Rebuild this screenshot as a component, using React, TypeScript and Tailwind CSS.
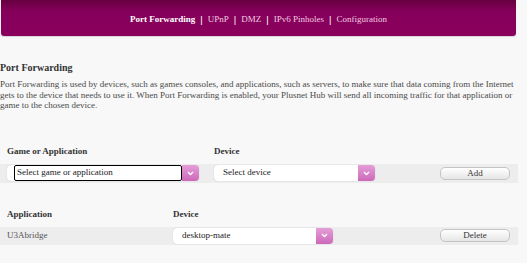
import React from "react";

const tabs = ["UPnP", "DMZ", "IPv6 Pinholes", "Configuration"];

const Chevron = () => (
  <svg width="7" height="5" viewBox="0 0 7 5" className="block">
    <path d="M1 1 L3.5 3.5 L6 1" fill="none" stroke="#fff" strokeWidth="1.3" />
  </svg>
);

const FakeSelect = ({
  label,
  width,
  focused = false,
}: {
  label: string;
  width: string;
  focused?: boolean;
}) => (
  <div className={`flex h-[16px] ${width} rounded-[4px] bg-white shadow-[0_0_1px_rgba(0,0,0,0.25)]`}>
    {focused ? (
      <div className="ml-[7px] flex flex-1 items-center rounded-[2px] border border-black pl-[2px] text-[9px] text-[#222]">
        {label}
      </div>
    ) : (
      <div className="flex flex-1 items-center pl-[9px] text-[9px] text-[#222]">{label}</div>
    )}
    <div className="flex w-[17px] items-center justify-center rounded-r-[4px] bg-gradient-to-b from-[#e59ed8] to-[#cc68b9]">
      <Chevron />
    </div>
  </div>
);

const Btn = ({ children }: { children: React.ReactNode }) => (
  <button className="flex h-[13px] w-[70px] items-center justify-center rounded-[5px] border border-[#c4c4c4] bg-gradient-to-b from-white to-[#e6e6e6] text-[9px] leading-none text-[#333] shadow-[inset_0_1px_0_#fff]">
    {children}
  </button>
);

export default function App() {
  return (
    <div
      className="h-[263px] w-[527px] overflow-hidden bg-[#f8f8f8] text-[#444]"
      style={{ fontFamily: '"Liberation Serif", "Times New Roman", serif' }}
    >
      <div className="ml-[1px] flex h-[36px] w-[515px] items-center justify-center rounded-b-[3px] bg-gradient-to-b from-[#66003f] via-[#85005a] via-30% to-[#8a005d] pt-[3px] text-[9px] shadow-[0_1px_1px_rgba(0,0,0,0.15)]">
        <span className="font-bold text-white">Port Forwarding</span>
        {tabs.map((t) => (
          <React.Fragment key={t}>
            <span className="mx-[5px] text-[11px] font-bold leading-none text-white">|</span>
            <span className="text-[#f2c9e4]">{t}</span>
          </React.Fragment>
        ))}
      </div>

      <div className="w-[518px]">
        <h2 className="mt-[26px] text-[10px] font-bold leading-[12px] text-[#333]">Port Forwarding</h2>
        <p className="mt-[5px] text-[9px] leading-[10.5px] text-[#4a4a4a]">
          Port Forwarding is used by devices, such as games consoles, and applications, such as servers, to make sure
          that data coming from the Internet gets to the device that needs to use it. When Port Forwarding is enabled,
          your Plusnet Hub will send all incoming traffic for that application or game to the chosen device.
        </p>

        <div className="mt-[34px] grid grid-cols-[214px_226px_1fr] text-[9px] font-bold leading-[12px] text-[#333]">
          <div className="pl-[7px]">Game or Application</div>
          <div>Device</div>
          <div />
        </div>
        <div className="mt-[7px] grid h-[19px] grid-cols-[214px_226px_1fr] items-center bg-[#ededed]">
          <div className="pl-[7px]">
            <FakeSelect label="Select game or application" width="w-[192px]" focused />
          </div>
          <div>
            <FakeSelect label="Select device" width="w-[161px]" />
          </div>
          <div>
            <Btn>Add</Btn>
          </div>
        </div>

        <div className="mt-[25px] grid grid-cols-[173px_267px_1fr] text-[9px] font-bold leading-[12px] text-[#333]">
          <div className="pl-[7px]">Application</div>
          <div>Device</div>
          <div />
        </div>
        <div className="mt-[7px] grid h-[18px] grid-cols-[173px_267px_1fr] items-center bg-[#ededed]">
          <div className="pl-[7px] text-[9px] text-[#555]">U3Abridge</div>
          <div>
            <FakeSelect label="desktop-mate" width="w-[160px]" />
          </div>
          <div>
            <Btn>Delete</Btn>
          </div>
        </div>
      </div>
    </div>
  );
}
